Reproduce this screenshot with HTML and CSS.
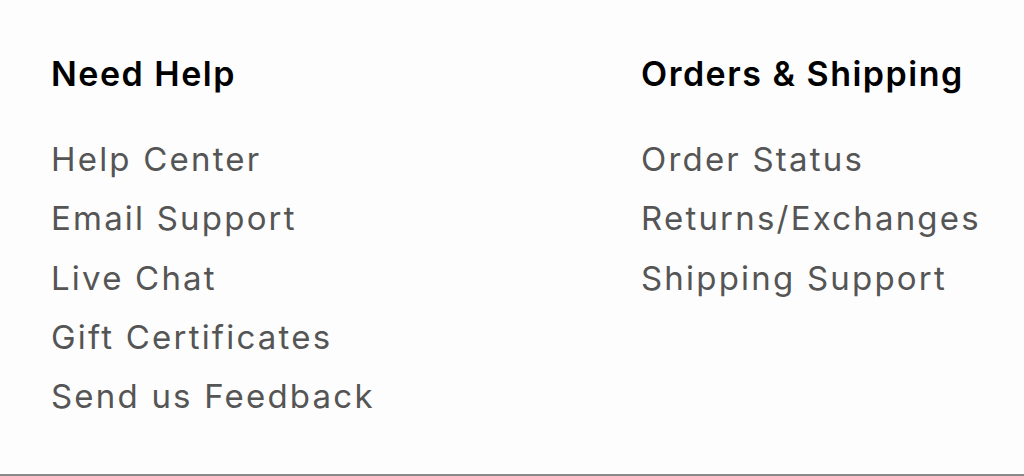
FILE: index.html
```html
<!DOCTYPE html>
<html lang="en">
<head>
<meta charset="utf-8">
<link rel="stylesheet" href="styles.css">
</head>
<body>
<footer class="footer">
  <div class="cols">
    <section class="col">
      <h2 class="title">Need Help</h2>
      <ul class="links">
        <li><a href="#">Help Center</a></li>
        <li><a href="#">Email Support</a></li>
        <li><a href="#">Live Chat</a></li>
        <li><a href="#">Gift Certificates</a></li>
        <li><a href="#">Send us Feedback</a></li>
      </ul>
    </section>
    <section class="col">
      <h2 class="title">Orders &amp; Shipping</h2>
      <ul class="links">
        <li><a href="#">Order Status</a></li>
        <li><a href="#">Returns/Exchanges</a></li>
        <li><a href="#">Shipping Support</a></li>
      </ul>
    </section>
  </div>
</footer>
</body>
</html>
```
FILE: styles.css
```css
html, body {
  margin: 0;
  padding: 0;
  background: #fdfdfd;
}
.footer {
  height: 474px;
  border-bottom: 2px solid #8a8a8a;
  font-family: Inter, "Open Sans", sans-serif;
}
.cols {
  display: grid;
  grid-template-columns: 590px 1fr;
  padding: 52px 0 0 51px;
}
.title {
  margin: 0;
  font-size: 34px;
  font-weight: 600;
  letter-spacing: 1.5px;
  color: #000;
  line-height: 44px;
}
.links {
  list-style: none;
  margin: 34px 0 0;
  padding: 0;
}
.links li {
  line-height: 59.3px;
  font-size: 33px;
  letter-spacing: 2.2px;
}
.links a {
  color: #555;
  text-decoration: none;
}
```
